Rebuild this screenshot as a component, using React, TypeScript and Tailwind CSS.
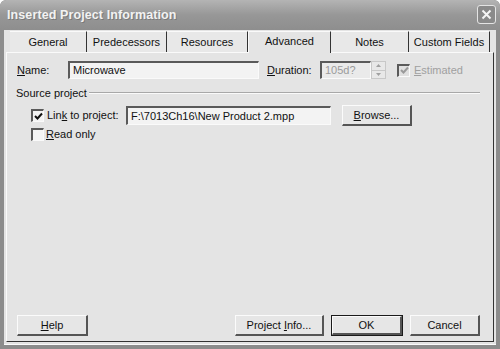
import React from 'react';

const font = { fontFamily: '"Liberation Sans", Arial, sans-serif' };

const tabs = [
  { label: 'General', w: 'w-[77px]' },
  { label: 'Predecessors', w: 'w-[80px]' },
  { label: 'Resources', w: 'w-[81px]' },
  { label: 'Advanced', w: 'w-[83px]', active: true },
  { label: 'Notes', w: 'w-[78px]' },
  { label: 'Custom Fields', w: 'w-[81px]' },
];

const sunken =
  'border-t-2 border-l-2 border-b border-r border-t-[#5a5a5a] border-l-[#5a5a5a] border-b-[#fafafa] border-r-[#fafafa]';

const Btn = ({ children, w, isDefault }: { children: React.ReactNode; w: string; isDefault?: boolean }) => (
  <div className={`${w} h-[21px] ${isDefault ? 'border border-[#1a1a1a]' : ''}`}>
    <div className="h-full w-full flex items-center justify-center bg-[#e6e6e6] border-t border-l border-t-[#fbfbfb] border-l-[#fbfbfb] border-b-2 border-r-2 border-b-[#555] border-r-[#555] text-[11px] text-[#111]">
      <span>{children}</span>
    </div>
  </div>
);

const Check = ({ checked, disabled }: { checked?: boolean; disabled?: boolean }) => (
  <div className={`w-[13px] h-[13px] ${sunken} ${disabled ? 'bg-[#e0e0e0]' : 'bg-[#f4f4f4]'} flex items-center justify-center`}>
    {checked && (
      <svg width="9" height="9" viewBox="0 0 9 9">
        <path d="M1 4 L3.5 6.5 L8 1.5" fill="none" stroke={disabled ? '#9a9a9a' : '#111'} strokeWidth="2" />
      </svg>
    )}
  </div>
);

export default function App() {
  return (
    <div style={font} className="w-[500px] h-[349px] bg-[#8c8c8c] rounded-t-[6px] flex flex-col overflow-hidden">
      {/* title bar */}
      <div className="h-[30px] flex items-center justify-between pl-[7px] pr-[4px] bg-gradient-to-b from-[#b4b4b4] via-[#979797] to-[#8e8e8e] rounded-t-[6px]">
        <span className="text-[12.5px] font-bold text-[#f2f2f2] tracking-[0.1px]" style={{ textShadow: '1px 1px 0 #7a7a7a' }}>
          Inserted Project Information
        </span>
        <div className="w-[19px] h-[19px] rounded-[3px] border border-[#e4e4e4] bg-[#8a8a8a] flex items-center justify-center mb-[1px]">
          <svg width="11" height="11" viewBox="0 0 11 11">
            <path d="M1.5 1.5 L9.5 9.5 M9.5 1.5 L1.5 9.5" stroke="#f5f5f5" strokeWidth="2" />
          </svg>
        </div>
      </div>

      {/* body */}
      <div className="flex-1 mx-[4px] mb-[4px] bg-[#e4e4e4] flex flex-col pr-[2px] pb-[2px] border-b border-b-[#fafafa]">
        {/* tab strip */}
        <div className="h-[22px] flex items-end pl-[6px] text-[11px] text-[#111]">
          {tabs.map((t) =>
            t.active ? (
              <div key={t.label} className={`${t.w} h-[22px] bg-[#e4e4e4] border-t border-l border-t-[#fafafa] border-l-[#fafafa] border-r border-r-[#333] flex items-center justify-center -mb-[1px] relative z-10 pb-[2px]`}>
                {t.label}
              </div>
            ) : (
              <div key={t.label} className={`${t.w} h-[21px] bg-[#e8e8e8] border-t border-t-[#fafafa] border-r border-r-[#333] flex items-center justify-center pt-[1px]`}>
                {t.label}
              </div>
            )
          )}
        </div>

        {/* panel */}
        <div className="flex-1 ml-[2px] flex flex-col border-t border-l border-t-[#fafafa] border-l-[#fafafa] border-r border-b border-r-[#333] border-b-[#333] text-[11px] text-[#111]">
          {/* name / duration row */}
          <div className="mt-[8px] flex items-center h-[18px] pl-[10px]">
            <span className="w-[51px]">
              <u>N</u>ame:
            </span>
            <div className={`w-[191px] h-[18px] ${sunken} bg-[#f3f3f3] flex items-center pl-[3px]`}>Microwave</div>
            <span className="ml-[8px] w-[53px]">
              <u>D</u>uration:
            </span>
            <div className={`w-[51px] h-[18px] ${sunken} bg-[#eaeaea] flex items-center pl-[3px] text-[#9a9a9a]`}>105d?</div>
            <div className="w-[15px] h-[18px] flex flex-col border border-[#c8c8c8]">
              <div className="flex-1 bg-[#e8e8e8] border-b border-[#c8c8c8] flex items-center justify-center">
                <svg width="5" height="3" viewBox="0 0 5 3"><path d="M0 3 L2.5 0 L5 3 Z" fill="#a0a0a0" /></svg>
              </div>
              <div className="flex-1 bg-[#e8e8e8] flex items-center justify-center">
                <svg width="5" height="3" viewBox="0 0 5 3"><path d="M0 0 L2.5 3 L5 0 Z" fill="#a0a0a0" /></svg>
              </div>
            </div>
            <div className="ml-[11px]">
              <Check checked disabled />
            </div>
            <span className="ml-[4px] text-[#a0a0a0]">
              <u>E</u>stimated
            </span>
          </div>

          {/* source project group */}
          <div className="mt-[6px] flex items-center pl-[9px] pr-[13px]">
            <span>Source project</span>
            <div className="flex-1 ml-[2px] h-[2px] border-t border-t-[#a8a8a8] border-b border-b-[#fafafa]" />
          </div>

          <div className="mt-[4px] flex items-center h-[20px] pl-[24px]">
            <Check checked />
            <span className="ml-[3px] w-[79px]">
              Lin<u>k</u> to project:
            </span>
            <div className={`w-[205px] h-[19px] ${sunken} bg-[#f3f3f3] flex items-center pl-[3px]`}>
              F:\7013Ch16\New Product 2.mpp
            </div>
            <div className="ml-[11px]">
              <Btn w="w-[70px]">
                <u>B</u>rowse...
              </Btn>
            </div>
          </div>

          <div className="mt-[2px] flex items-center h-[14px] pl-[24px]">
            <Check />
            <span className="ml-[2px]">
              <u>R</u>ead only
            </span>
          </div>

          <div className="flex-1" />

          {/* buttons */}
          <div className="flex items-center pl-[10px] pr-[13px] mb-[5px]">
            <Btn w="w-[71px]">
              <u>H</u>elp
            </Btn>
            <div className="flex-1" />
            <Btn w="w-[89px]">
              Project <u>I</u>nfo...
            </Btn>
            <div className="ml-[7px]">
              <Btn w="w-[72px]" isDefault>
                OK
              </Btn>
            </div>
            <div className="ml-[7px]">
              <Btn w="w-[70px]">Cancel</Btn>
            </div>
          </div>
        </div>
      </div>
    </div>
  );
}
